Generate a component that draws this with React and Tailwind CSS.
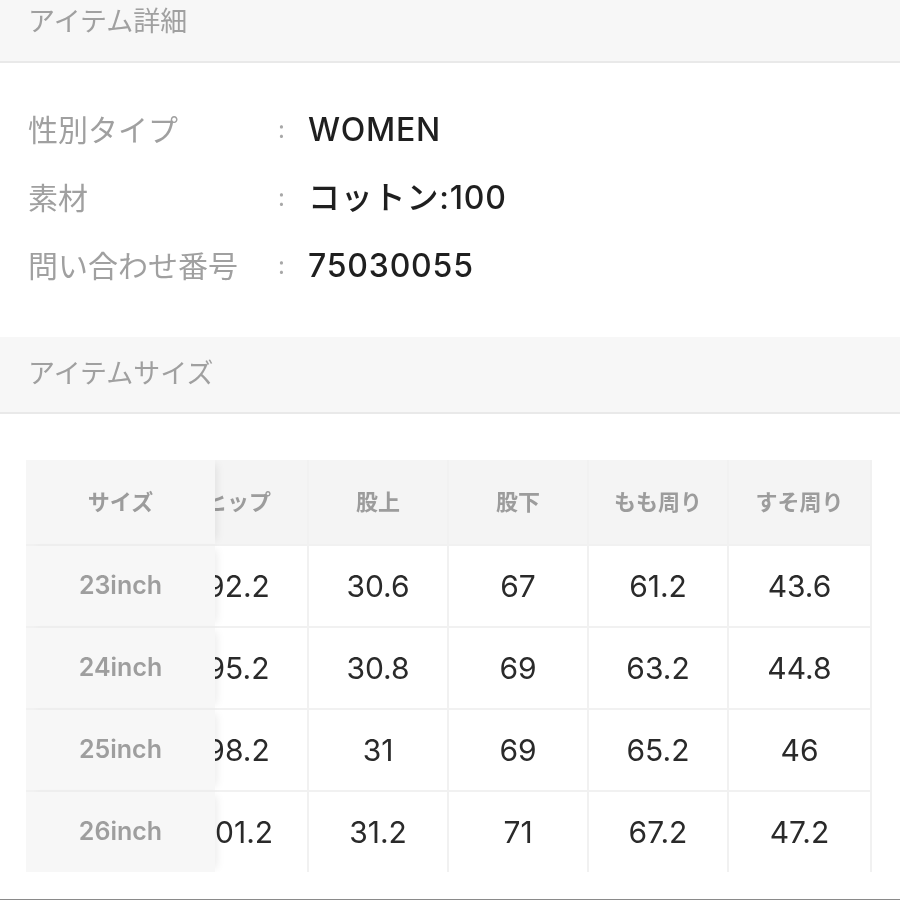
import React from 'react';

const details = [
  { label: '性別タイプ', value: 'WOMEN' },
  { label: '素材', value: 'コットン:100' },
  { label: '問い合わせ番号', value: '75030055' },
];

const heads = ['サイズ', 'ヒップ', '股上', '股下', 'もも周り', 'すそ周り'];

const rows = [
  ['23inch', '92.2', '30.6', '67', '61.2', '43.6'],
  ['24inch', '95.2', '30.8', '69', '63.2', '44.8'],
  ['25inch', '98.2', '31', '69', '65.2', '46'],
  ['26inch', '101.2', '31.2', '71', '67.2', '47.2'],
];

const SectionHead = ({ children, className = '' }) => (
  <div className={`bg-[#f7f7f7] border-b-2 border-[#e9e9e9] pl-[28px] text-[27px] text-[#a0a0a0] ${className}`}>
    {children}
  </div>
);

const App = () => {
  return (
    <div className="min-h-screen bg-white font-['Inter','Noto_Sans_CJK_JP',sans-serif]">
      <SectionHead className="h-[63px] pt-[6px] leading-[32px]">アイテム詳細</SectionHead>

      <div className="pt-[33px] pb-[37px]">
        {details.map((d) => (
          <div key={d.label} className="flex items-center h-[68px] pl-[28px]">
            <div className="w-[250px] text-[30px] text-[#a0a0a0]">{d.label}</div>
            <div className="w-[30px] text-[24px] text-[#a8a8a8]">:</div>
            <div className="text-[32px] font-medium tracking-[0.8px] text-[#1f1f1f]">{d.value}</div>
          </div>
        ))}
      </div>

      <SectionHead className="h-[77px] flex items-center">アイテムサイズ</SectionHead>

      <div className="pt-[46px] pl-[26px]">
        <div
          className="w-[846px] overflow-x-auto [scrollbar-width:none]"
          ref={(el) => {
            if (el) el.scrollLeft = 48;
          }}
        >
          <div className="grid w-max grid-cols-[189px_138px_138px_138px_138px_141px] gap-[2px] bg-[#f1f1f1] pr-[2px]">
            {heads.map((h, i) => (
              <div
                key={h}
                className={`h-[84px] flex items-center justify-center text-[22px] font-semibold text-[#9c9c9c] ${
                  i === 0
                    ? 'sticky left-0 z-10 bg-[#f6f6f6] shadow-[6px_0_8px_-4px_rgba(0,0,0,0.08)]'
                    : 'bg-[#f4f4f4]'
                }`}
              >
                {h}
              </div>
            ))}
            {rows.map((r) =>
              r.map((c, i) => (
                <div
                  key={r[0] + i}
                  className={`h-[80px] flex items-center justify-center ${
                    i === 0
                      ? 'sticky left-0 z-10 bg-[#f7f7f7] text-[25px] font-semibold text-[#9e9e9e] shadow-[6px_0_8px_-4px_rgba(0,0,0,0.08)]'
                      : 'bg-white text-[30px] text-[#2a2a2a]'
                  }`}
                >
                  {c}
                </div>
              ))
            )}
          </div>
        </div>
      </div>

      <div className="mt-[27px] h-[2px] bg-[#8a8a8a]" />
    </div>
  );
};

export default App;
